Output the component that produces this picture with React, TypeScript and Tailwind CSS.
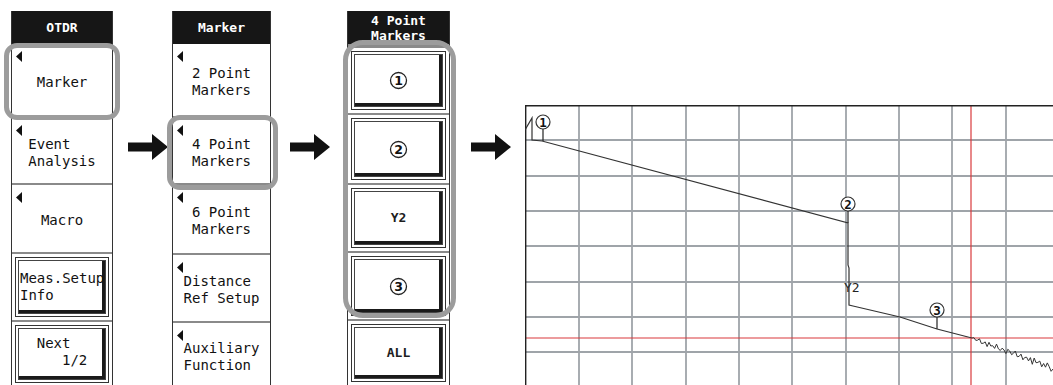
import React from 'react';

const mono = "font-['DejaVu_Sans_Mono','Liberation_Mono',monospace]";

function Tri() {
  return (
    <svg width="6" height="11" viewBox="0 0 6 11" className="absolute left-[4px] top-[7px]">
      <path d="M6 0 L0 5.5 L6 11 Z" fill="#111" />
    </svg>
  );
}

function Circled({ n, size = 19 }: { n: string; size?: number }) {
  return (
    <svg width={size} height={size} viewBox="0 0 19 19">
      <circle cx="9.5" cy="9.5" r="8" fill="white" stroke="#222" strokeWidth="1.3" />
      <text x="9.5" y="14" textAnchor="middle" fontSize="12.5" fontWeight="700" fontFamily="DejaVu Sans, sans-serif" fill="#111">
        {n}
      </text>
    </svg>
  );
}

function SoftKey({ h, lines, first }: { h: number; lines: string[]; first?: boolean }) {
  return (
    <div
      className={`relative flex items-center justify-center bg-white ${first ? '' : 'border-t-2 border-[#8a8a8a]'}`}
      style={{ height: h }}
    >
      <Tri />
      <div className={`${mono} text-[14px] leading-[17px] text-[#111] whitespace-pre text-left pt-[4px]`}>
        {lines.map((l) => (
          <div key={l}>{l}</div>
        ))}
      </div>
    </div>
  );
}

function Bevel({ h, children, className = '' }: { h: number; children: React.ReactNode; className?: string }) {
  return (
    <div className="border-t-2 border-[#8a8a8a] bg-white p-[3px]" style={{ height: h }}>
      <div className="h-full border border-[#333] p-[2px]">
        <div
          className={`h-full border border-[#444] shadow-[inset_-3px_-3px_0_#1a1a1a] flex items-center ${className}`}
        >
          {children}
        </div>
      </div>
    </div>
  );
}

function Header({ children }: { children: React.ReactNode }) {
  return (
    <div className={`h-[33px] bg-[#161616] text-white ${mono} font-bold text-[13px] leading-[15px] flex flex-col items-center justify-center`}>
      {children}
    </div>
  );
}

function Highlight({ className }: { className: string }) {
  return <div className={`absolute border-[5px] border-[#9c9c9c] pointer-events-none ${className}`} />;
}

function Arrow() {
  return (
    <svg width="40" height="26" viewBox="0 0 40 26">
      <path d="M0 8.5 H24 V0 L40 13 L24 26 V17.5 H0 Z" fill="#111" />
    </svg>
  );
}

// jitter for the noisy tail past the red cursor
const jitter = [0, -1, 1, 0, -2, 2, 1, -1, 3, -2, 1, 0, 2, -3, 1, 2, -1, 0, 3, -2, -1, 2, 0, -3, 2, 1, -2, 3, 0, -1, 2, -2, 4, -3, 1, 0, -2, 3, -1, 2, -3, 0, 4, 1];

function Graph() {
  const W = 528;
  const H = 280;
  const vx = [54, 107, 161, 214, 267, 321, 374, 427, 481];
  const hy = [35, 71, 106, 141, 177, 212, 247];
  const noise: string[] = ['443,232'];
  const n = jitter.length;
  for (let i = 0; i < n; i++) {
    const x = 447 + (i * 81) / (n - 1);
    const y = 233 + (i / (n - 1)) * 30 + jitter[i];
    noise.push(`${x.toFixed(1)},${y.toFixed(1)}`);
  }
  return (
    <svg width={W} height={H} viewBox={`0 0 ${W} ${H}`} className="block">
      {vx.map((x) => (
        <line key={x} x1={x} y1={0} x2={x} y2={H} stroke="#9fa4a9" strokeWidth="1.8" />
      ))}
      {hy.map((y) => (
        <line key={y} x1={0} y1={y} x2={W} y2={y} stroke="#9fa4a9" strokeWidth="1.8" />
      ))}
      <line x1={446} y1={0} x2={446} y2={H} stroke="#d9393c" strokeWidth="1.2" />
      <line x1={0} y1={233} x2={W} y2={233} stroke="#d9393c" strokeWidth="1.2" />
      <line x1={0} y1={0.7} x2={W} y2={0.7} stroke="#222" strokeWidth="1.4" />
      <line x1={0.7} y1={0} x2={0.7} y2={H} stroke="#222" strokeWidth="1.4" />
      <polyline
        points="0,25 7,13 7,35 17,36 323,118 323,160 324,163 324,200 328,201 375,212 412,224 443,232"
        fill="none"
        stroke="#333"
        strokeWidth="1.2"
      />
      <polyline points={noise.join(' ')} fill="none" stroke="#333" strokeWidth="1" />
      <line x1={18} y1={24} x2={18} y2={36} stroke="#222" strokeWidth="1.2" />
      <line x1={323} y1={106} x2={323} y2={118} stroke="#222" strokeWidth="1.2" />
      <line x1={412} y1={212} x2={412} y2={224} stroke="#222" strokeWidth="1.2" />
      <g transform="translate(9,8)">
        <circle cx="9" cy="9" r="7" fill="white" stroke="#333" strokeWidth="1.2" />
        <text x="9" y="13.5" textAnchor="middle" fontSize="12.5" fontWeight="700" fontFamily="DejaVu Sans Mono, monospace" fill="#111">1</text>
      </g>
      <g transform="translate(314,90)">
        <circle cx="9" cy="9" r="7" fill="white" stroke="#333" strokeWidth="1.2" />
        <text x="9" y="13.5" textAnchor="middle" fontSize="12.5" fontWeight="700" fontFamily="DejaVu Sans Mono, monospace" fill="#111">2</text>
      </g>
      <g transform="translate(403,196)">
        <circle cx="9" cy="9" r="7" fill="white" stroke="#333" strokeWidth="1.2" />
        <text x="9" y="13.5" textAnchor="middle" fontSize="12.5" fontWeight="700" fontFamily="DejaVu Sans Mono, monospace" fill="#111">3</text>
      </g>
      <text x="319" y="187" fontSize="13" fontFamily="DejaVu Sans Mono, monospace" fill="#222">Y2</text>
    </svg>
  );
}

export default function App() {
  return (
    <div className="w-[1053px] h-[385px] overflow-hidden bg-white flex">
      <div className="ml-[11px] pt-[11px] w-[102px]">
        <div className="relative border-x border-[#333] h-[374px]">
          <Header>OTDR</Header>
          <SoftKey h={72} lines={['Marker']} first />
          <SoftKey h={67} lines={['Event', 'Analysis']} />
          <SoftKey h={69} lines={['Macro']} />
          <Bevel h={68}>
            <div className={`${mono} text-[14px] leading-[17px] text-[#111] pl-[1px]`}>
              <div>Meas.Setup</div>
              <div>Info</div>
            </div>
          </Bevel>
          <Bevel h={66} className="justify-center">
            <div className={`${mono} text-[14px] leading-[17px] text-[#111] whitespace-pre pb-[4px]`}>
              <div>Next</div>
              <div>{'   1/2'}</div>
            </div>
          </Bevel>
          <Highlight className="left-[-8px] top-[32px] w-[116px] h-[77px] rounded-[13px]" />
        </div>
      </div>

      <div className="w-[59px] pt-[134px] pl-[15px]">
        <Arrow />
      </div>

      <div className="pt-[11px] w-[99px]">
        <div className="relative border-x border-[#333] h-[374px]">
          <Header>Marker</Header>
          <SoftKey h={72} lines={['2 Point', 'Markers']} first />
          <SoftKey h={67} lines={['4 Point', 'Markers']} />
          <SoftKey h={70} lines={['6 Point', 'Markers']} />
          <SoftKey h={68} lines={['Distance', 'Ref Setup']} />
          <SoftKey h={66} lines={['Auxiliary', 'Function']} />
          <Highlight className="left-[-6px] top-[104px] w-[111px] h-[75px] rounded-[13px]" />
        </div>
      </div>

      <div className="w-[76px] pt-[134px] pl-[19px]">
        <Arrow />
      </div>

      <div className="pt-[11px] w-[103px]">
        <div className="relative border-x border-[#333] h-[374px]">
          <Header>
            <div>4 Point</div>
            <div>Markers</div>
          </Header>
          <div className="h-[2px] bg-[#8a8a8a]" />
          <Bevel h={67} className="justify-center">
            <Circled n="1" />
          </Bevel>
          <Bevel h={70} className="justify-center">
            <Circled n="2" />
          </Bevel>
          <Bevel h={68} className="justify-center">
            <span className={`${mono} font-bold text-[13px] text-[#1e1e1e]`}>Y2</span>
          </Bevel>
          <Bevel h={68} className="justify-center">
            <Circled n="3" />
          </Bevel>
          <Bevel h={66} className="justify-center">
            <span className={`${mono} font-bold text-[13px] text-[#1e1e1e]`}>ALL</span>
          </Bevel>
          <Highlight className="left-[-5px] top-[29px] w-[113px] h-[278px] rounded-[20px]" />
        </div>
      </div>

      <div className="w-[75px] pt-[134px] pl-[21px]">
        <Arrow />
      </div>

      <div className="pt-[105px]">
        <Graph />
      </div>
    </div>
  );
}
